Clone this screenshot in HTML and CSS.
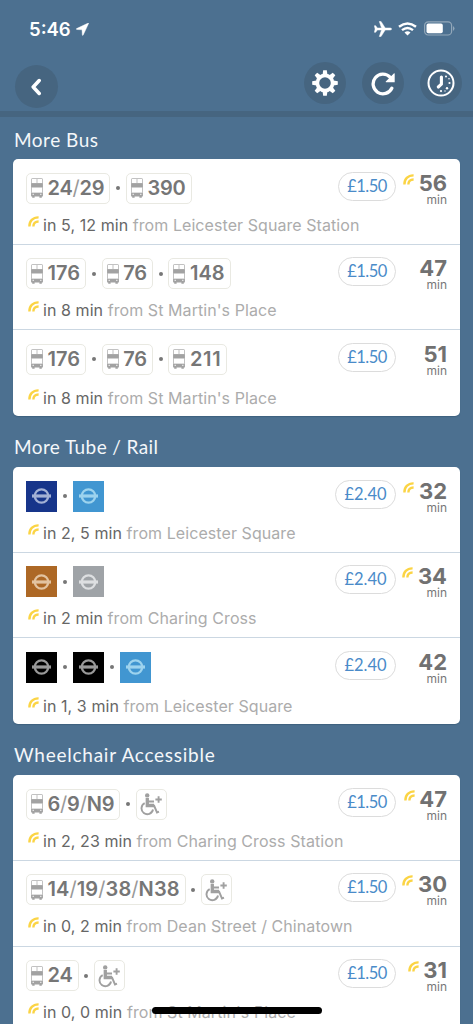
FILE: index.html
```html
<!DOCTYPE html>
<html lang="en">
<head>
<meta charset="utf-8">
<title>Routes</title>
<link rel="stylesheet" href="styles.css">
</head>
<body>
<svg class="defs" aria-hidden="true">
  <symbol id="bus" viewBox="0 0 12 20">
    <path fill="#c2c2c2" fill-rule="evenodd" d="M1.500 0h9Q12 0 12 1.500V18H0V1.500Q0 0 1.500 0ZM1 1V5H5.500V1ZM6.500 1V5H11V1ZM1 9.500V14.500H11V9.500Z"/>
    <path fill="#a2a2a2" d="M.2 5.200h11.600v4.100H.2ZM.2 15h11.600V18.400h-1v1.400H8.400V18.400H3.600v1.400H1.200V18.400h-1Z"/>
    <path fill="#e2e2e2" d="M1.500 15.800h1.500v1.200H1.500ZM9 15.800h1.500v1.200H9Z"/>
  </symbol>
  <symbol id="signal" viewBox="0 0 11 11">
    <g fill="none" stroke="#fbd444" stroke-width="2.400"><path d="M1.400 10.500C1.300 5.200 4.800 1.300 10.600 1.400"/><path d="M5.400 10.500C5.300 7.500 7 5.500 10.600 5.500"/></g>
  </symbol>
  <symbol id="rail" viewBox="0 0 19 16">
    <circle cx="9.500" cy="8" r="6.700" fill="none" stroke="currentColor" stroke-width="2.300"/>
    <path fill="currentColor" d="M0 6.400h19v3.200H0Z"/>
  </symbol>
  <symbol id="chair" viewBox="0 0 24 24">
    <circle cx="7.200" cy="3.400" r="2.200" fill="#a0a0a0"/>
    <g fill="none" stroke="#a0a0a0"><path stroke-width="3.300" d="M7.300 6V13.500H14"/><path stroke-width="1.900" d="M8 9.500H14M13.800 13L17 20.400L19 19.600"/><path stroke-width="1.900" d="M4.700 11.200A5.800 5.800 0 1 0 13 17.500"/><path stroke-width="1.900" d="M15.400 7.500h6.400M18.600 4.300v6.400"/></g>
  </symbol>
</svg>
<div class="screen">
  <header class="top">
    <div class="status">
      <div class="clock"><span>5:46</span>
        <svg class="locate" viewBox="0 0 13 13"><path fill="#fff" stroke="#fff" stroke-width=".4" d="M12.600.4Q13 0 12.200.1L.6 5.600Q-.2 6.300.8 6.500L6 6.800L6.300 12Q6.600 13 7.200 12.100Z"/></svg>
      </div>
      <div class="indicators">
        <svg width="18" height="16" viewBox="0 0 18 16"><path fill="#fff" stroke="#fff" stroke-width=".5" d="M17.600 8Q17.600 9 16 9H11.200L7 15.600H5.300L7.500 9H3.300L1.700 11.300H.4L1.100 8L.4 4.700H1.700L3.300 7H7.500L5.300.4H7L11.200 7H16Q17.600 7 17.600 8Z"/></svg>
        <svg class="wifi" width="19" height="14" viewBox="0 0 19 14"><g fill="none" stroke="#fff" stroke-width="2.400"><path d="M1 4.800Q9.500-1.900 18 4.800"/><path d="M4 8.100Q9.500 3.700 15 8.100"/></g><path fill="#fff" d="M6.500 10.500Q9.500 8.200 12.500 10.500L9.500 13.600Z"/></svg>
        <svg class="battery" width="31" height="15" viewBox="0 0 31 15"><rect x=".6" y=".8" width="27" height="13.200" rx="3.600" fill="none" stroke="#92a7b9" stroke-width="1.200"/><rect x="2.500" y="2.600" width="16.300" height="9.600" rx="1.800" fill="#fff"/><path fill="#92a7b9" d="M29 5q3 2.400 0 5Z"/></svg>
      </div>
    </div>
    <nav class="bar">
      <button class="round back" aria-label="Back"><svg width="12" height="18" viewBox="0 0 12 18"><path d="M8.200 2.500L2.200 9L8.200 15.500" fill="none" stroke="#fff" stroke-width="3.500" stroke-linecap="round" stroke-linejoin="round"/></svg></button>
      <div class="actions">
        <button class="round" aria-label="Settings"><svg width="26" height="26" viewBox="-13 -13 26 26"><circle r="7.600" fill="none" stroke="#fff" stroke-width="3.600"/><g fill="#fff"><path id="tooth" d="M-2.400-8.500L-1.800-12.800H1.800L2.400-8.500Z"/><use href="#tooth" transform="rotate(45)"/><use href="#tooth" transform="rotate(90)"/><use href="#tooth" transform="rotate(135)"/><use href="#tooth" transform="rotate(180)"/><use href="#tooth" transform="rotate(225)"/><use href="#tooth" transform="rotate(270)"/><use href="#tooth" transform="rotate(315)"/></g></svg></button>
        <button class="round" aria-label="Refresh"><svg width="26" height="26" viewBox="0 0 26 26"><path d="M21.800 18.200A9.800 9.800 0 1 1 20 7.200" fill="none" stroke="#fff" stroke-width="3.300" stroke-linecap="round"/><path fill="#fff" d="M24.700 3.500V12.200H16.200Q15 12 16 11.200L23.800 3.500Q24.500 2.900 24.700 3.500Z"/></svg></button>
        <button class="round" aria-label="Schedule"><svg width="28" height="28" viewBox="-14 -14 28 28"><circle r="12.500" fill="none" stroke="#fff" stroke-width="2"/><path d="M.4-6V1.200L-2.700 4" fill="none" stroke="#fff" stroke-width="3.100" stroke-linecap="round" stroke-linejoin="round"/><g fill="#fff"><circle cx="5" cy="-6.500" r="1"/><circle cx="8" cy="-4.200" r=".8"/><circle cx="8.500" cy="0" r="1.100"/><circle cx="6" cy="5.300" r="1.200"/><circle cx="0" cy="8.100" r="1.100"/><circle cx="4" cy="8" r=".7"/></g></svg></button>
      </div>
    </nav>
  </header>
  <main>
    <section>
      <h2>More Bus</h2>
      <div class="card">
        <article class="route">
          <div class="legs"><span class="chip"><svg class="bus"><use href="#bus"/></svg><b>24<i>/</i>29</b></span><span class="dot"></span><span class="chip"><svg class="bus"><use href="#bus"/></svg><b>390</b></span></div>
          <span class="price">£1.50</span>
          <div class="time"><div class="mins"><svg class="signal"><use href="#signal"/></svg>56</div><small>min</small></div>
          <p class="next"><svg class="signal"><use href="#signal"/></svg><span><em>in 5, 12 min</em> from Leicester Square Station</span></p>
        </article>
        <article class="route">
          <div class="legs"><span class="chip loose"><svg class="bus"><use href="#bus"/></svg><b>176</b></span><span class="dot"></span><span class="chip"><svg class="bus"><use href="#bus"/></svg><b>76</b></span><span class="dot"></span><span class="chip loose"><svg class="bus"><use href="#bus"/></svg><b>148</b></span></div>
          <span class="price">£1.50</span>
          <div class="time"><div class="mins">47</div><small>min</small></div>
          <p class="next"><svg class="signal"><use href="#signal"/></svg><span><em>in 8 min</em> from St Martin's Place</span></p>
        </article>
        <article class="route">
          <div class="legs"><span class="chip loose"><svg class="bus"><use href="#bus"/></svg><b>176</b></span><span class="dot"></span><span class="chip"><svg class="bus"><use href="#bus"/></svg><b>76</b></span><span class="dot"></span><span class="chip looser"><svg class="bus"><use href="#bus"/></svg><b>211</b></span></div>
          <span class="price">£1.50</span>
          <div class="time"><div class="mins">51</div><small>min</small></div>
          <p class="next"><svg class="signal"><use href="#signal"/></svg><span><em>in 8 min</em> from St Martin's Place</span></p>
        </article>
      </div>
    </section>
    <section>
      <h2 class="snug">More Tube / Rail</h2>
      <div class="card">
        <article class="route">
          <div class="legs"><span class="line piccadilly"><svg><use href="#rail"/></svg></span><span class="dot even"></span><span class="line victoria"><svg><use href="#rail"/></svg></span></div>
          <span class="price wide">£2.40</span>
          <div class="time"><div class="mins"><svg class="signal"><use href="#signal"/></svg>32</div><small>min</small></div>
          <p class="next"><svg class="signal"><use href="#signal"/></svg><span><em>in 2, 5 min</em> from Leicester Square</span></p>
        </article>
        <article class="route">
          <div class="legs"><span class="line bakerloo"><svg><use href="#rail"/></svg></span><span class="dot even"></span><span class="line jubilee"><svg><use href="#rail"/></svg></span></div>
          <span class="price wide">£2.40</span>
          <div class="time"><div class="mins"><svg class="signal"><use href="#signal"/></svg>34</div><small>min</small></div>
          <p class="next"><svg class="signal"><use href="#signal"/></svg><span><em>in 2 min</em> from Charing Cross</span></p>
        </article>
        <article class="route">
          <div class="legs"><span class="line northern"><svg><use href="#rail"/></svg></span><span class="dot even"></span><span class="line northern"><svg><use href="#rail"/></svg></span><span class="dot even"></span><span class="line victoria"><svg><use href="#rail"/></svg></span></div>
          <span class="price wide">£2.40</span>
          <div class="time"><div class="mins">42</div><small>min</small></div>
          <p class="next"><svg class="signal"><use href="#signal"/></svg><span><em>in 1, 3 min</em> from Leicester Square</span></p>
        </article>
      </div>
    </section>
    <section>
      <h2>Wheelchair Accessible</h2>
      <div class="card continued">
        <article class="route">
          <div class="legs"><span class="chip"><svg class="bus"><use href="#bus"/></svg><b>6<i>/</i>9<i>/</i>N9</b></span><span class="dot"></span><span class="chip access"><svg><use href="#chair"/></svg></span></div>
          <span class="price">£1.50</span>
          <div class="time"><div class="mins"><svg class="signal"><use href="#signal"/></svg>47</div><small>min</small></div>
          <p class="next"><svg class="signal"><use href="#signal"/></svg><span><em>in 2, 23 min</em> from Charing Cross Station</span></p>
        </article>
        <article class="route">
          <div class="legs"><span class="chip loose"><svg class="bus"><use href="#bus"/></svg><b>14<i>/</i>19<i>/</i>38<i>/</i>N38</b></span><span class="dot"></span><span class="chip access"><svg><use href="#chair"/></svg></span></div>
          <span class="price">£1.50</span>
          <div class="time"><div class="mins"><svg class="signal"><use href="#signal"/></svg>30</div><small>min</small></div>
          <p class="next"><svg class="signal"><use href="#signal"/></svg><span><em>in 0, 2 min</em> from Dean Street / Chinatown</span></p>
        </article>
        <article class="route">
          <div class="legs"><span class="chip"><svg class="bus"><use href="#bus"/></svg><b>24</b></span><span class="dot"></span><span class="chip access"><svg><use href="#chair"/></svg></span></div>
          <span class="price">£1.50</span>
          <div class="time"><div class="mins"><svg class="signal"><use href="#signal"/></svg>31</div><small>min</small></div>
          <p class="next"><svg class="signal"><use href="#signal"/></svg><span><em>in 0, 0 min</em> from St Martin's Place</span></p>
        </article>
      </div>
    </section>
  </main>
  <div class="home"></div>
</div>
</body>
</html>
```
FILE: styles.css
```css
* { box-sizing: border-box; }
body { margin: 0; background: #4c7090; font-family: Inter, "Liberation Sans", sans-serif; }
svg { display: block; flex: none; }
.defs { position: absolute; width: 0; height: 0; }
.screen { position: relative; width: 473px; height: 1024px; overflow: hidden; }
.top { height: 117px; border-bottom: 6px solid #466580; }
.status { height: 58px; display: flex; justify-content: space-between; padding: 0 18px 0 29px; }
.clock { display: flex; gap: 5px; font-size: 18.500px; font-weight: 600; line-height: 24px; padding-top: 17px; color: #fff; }
.locate { width: 13px; height: 13px; margin-top: 5.500px; }
.indicators { display: flex; align-items: flex-start; padding-top: 21px; }
.wifi { margin: 1px 7px 0 6px; }
.bar { display: flex; justify-content: space-between; align-items: flex-start; padding: 4px 11px 0 15px; }
.round { width: 42px; height: 42px; border: 0; padding: 0; border-radius: 50%; background: #466580; display: grid; place-items: center; }
.back { width: 43px; height: 43px; margin-top: 3px; }
.actions { display: flex; gap: 16px; }
h2 { margin: 0; height: 51px; padding: 18px 0 0 14px; font: 400 19px/26px Lato, sans-serif; letter-spacing: .75px; color: #f4f7fa; }
h2.snug { letter-spacing: .4px; }
section:first-child h2 { height: 42px; padding-top: 9.500px; letter-spacing: .5px; }
.card { margin: 0 13px 0 12.500px; background: #fff; border-radius: 5px; box-shadow: 0 1px 1px #3f617f; }
.route { height: 85.700px; display: grid; grid-template-columns: 1fr auto 51px; grid-template-rows: 56.500px 1fr; padding: 0 13px 0 13.500px; border-bottom: 1px solid #cbd7e2; }
.card:not(.continued) .route:last-child { border: 0; grid-template-rows: 59px 1fr; }
.legs { display: flex; align-items: center; height: 31px; margin-top: 13.500px; }
.chip { height: 31px; display: flex; align-items: center; gap: 4.500px; padding: 0 5px 0 4px; border: 1px solid #e9e9e2; border-radius: 5px; }
.chip b { font-size: 20px; font-weight: 600; line-height: 29px; letter-spacing: -.200px; color: #767676; }
.chip.loose b { letter-spacing: .1px; }
.chip.looser b { letter-spacing: .7px; }
.chip i { font-style: normal; font-weight: 400; color: #999; }
.bus { width: 12px; height: 20px; }
.access { width: 31px; padding: 0 0 0 3px; }
.access svg { width: 24px; height: 24px; }
.dot { width: 4px; height: 4px; margin: 0 5.750px; border-radius: 50%; background: #777; }
.dot.even { margin: 0 6px; }
.line { width: 31px; height: 31px; display: grid; place-items: center; }
.line svg { width: 19px; height: 16px; }
.piccadilly { background: #17358a; color: #a3b1d5; }
.victoria { background: #4196d1; color: #9dd3ee; }
.bakerloo { background: #ad6825; color: #e2c3a0; }
.jubilee { background: #9fa3a7; color: #dddfe1; }
.northern { background: #000; color: #999; }
.price { width: 58px; height: 29px; margin-top: 12.500px; border: 1px solid #dcdcdc; border-radius: 15px; text-align: center; font: 400 16.500px/27px Lato, sans-serif; letter-spacing: -.5px; color: #4a8bc9; }
.price.wide { width: 61px; letter-spacing: 0; }
.time { display: flex; flex-direction: column; align-items: flex-end; color: #717171; }
.mins { display: flex; gap: 4.500px; font-size: 22px; font-weight: 700; line-height: 18px; padding-top: 14.500px; }
.signal { width: 11px; height: 11px; }
small { font-size: 12px; line-height: 14px; margin-top: 1px; color: #777; }
.next { grid-column: 1 / -1; margin: 0; padding-left: 2px; display: flex; gap: 4px; font-size: 16px; line-height: 18px; letter-spacing: .07px; color: #acacac; white-space: nowrap; }
.next em { font-style: normal; color: #666; }
.home { position: absolute; left: 152px; top: 1007px; width: 170px; height: 7px; border-radius: 4px; background: #000; }
```
